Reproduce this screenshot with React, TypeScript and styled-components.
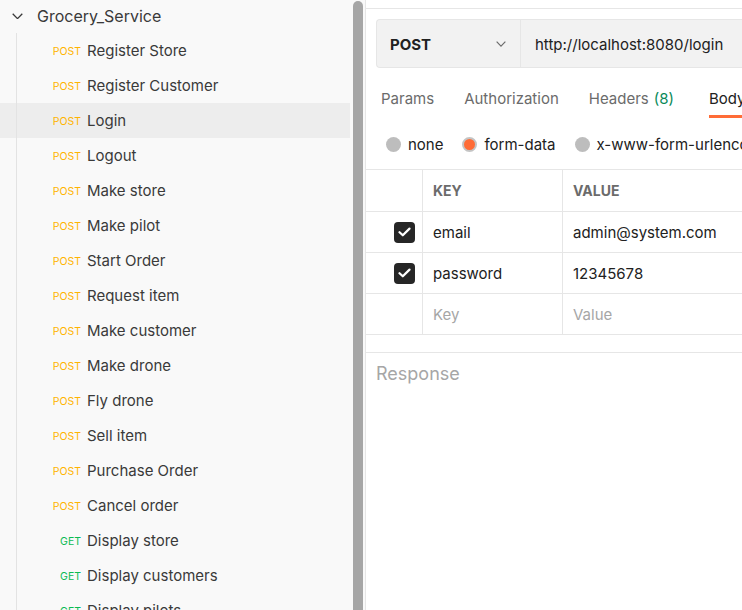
import React from "react";
import styled, { createGlobalStyle } from "styled-components";

const Global = createGlobalStyle`
  html, body { margin: 0; padding: 0; overflow: hidden; background: #fff; }
  body { font-family: Inter, "Noto Sans", sans-serif; }
  * { box-sizing: border-box; }
`;

const Shell = styled.div`
  display: flex;
  width: 742px;
  height: 610px;
  overflow: hidden;
`;

const Sidebar = styled.aside`
  flex: 0 0 365px;
  display: flex;
  background: #f9f9f9;
  border-right: 1px solid #e6e6e6;
`;

const Tree = styled.div`
  width: 350px;
  margin-top: -1px;
`;

const Track = styled.div`
  width: 15px;
  padding: 1px 0 0 3px;
`;

const Thumb = styled.div`
  width: 10px;
  height: 100%;
  background: #a6a6a6;
  border-radius: 5px 5px 0 0;
`;

const Folder = styled.div`
  display: flex;
  align-items: center;
  height: 34px;
  padding-left: 12px;
  gap: 14px;
  color: #3a3a3a;
  font-size: 16px;
`;

const Items = styled.div`
  position: relative;
  &::before {
    content: "";
    position: absolute;
    left: 16px;
    top: 0;
    bottom: 0;
    width: 1px;
    background: #e3e3e3;
  }
`;

const Row = styled.div<{ $active?: boolean }>`
  display: flex;
  align-items: center;
  height: 35px;
  padding-left: 44px;
  background: ${(p) => (p.$active ? "#ededed" : "transparent")};
`;

const Method = styled.span<{ $get?: boolean }>`
  width: 37px;
  padding-top: 2px;
  text-align: right;
  font-size: 10.5px;
  font-weight: 400;
  color: ${(p) => (p.$get ? "#0cbb52" : "#ffb400")};
`;

const Name = styled.span`
  margin-left: 6px;
  font-size: 15px;
  color: #3a3a3a;
`;

const Pane = styled.main`
  flex: 1 0 auto;
  width: 420px;
  background: #fff;
`;

const TopStrip = styled.div`
  height: 9px;
  border-bottom: 1px solid #e6e6e6;
`;

const RequestBar = styled.div`
  display: flex;
  margin: 10px 0 0 10px;
  width: 420px;
  height: 49px;
  background: #f2f2f2;
  border: 1px solid #e6e6e6;
  border-right: none;
  border-radius: 4px 0 0 4px;
`;

const MethodSelect = styled.div`
  display: flex;
  align-items: center;
  justify-content: space-between;
  width: 144px;
  padding: 1px 14px 0 13px;
  border-right: 1px solid #e6e6e6;
  font-size: 15px;
  font-weight: 700;
  color: #212121;
`;

const Url = styled.div`
  display: flex;
  align-items: center;
  padding: 1px 0 0 14px;
  font-size: 15px;
  color: #212121;
  white-space: nowrap;
`;

const Tabs = styled.div`
  display: flex;
  height: 50px;
  padding-left: 15px;
  gap: 30px;
  white-space: nowrap;
`;

const Tab = styled.div<{ $active?: boolean }>`
  display: flex;
  align-items: center;
  font-size: 15px;
  color: ${(p) => (p.$active ? "#212121" : "#6b6b6b")};
  border-bottom: 3px solid ${(p) => (p.$active ? "#ff6c37" : "transparent")};
  padding-top: 13px;
  margin-left: ${(p) => (p.$active ? "5px" : "0")};
`;

const Count = styled.span`
  color: #0a8a5a;
  margin-left: 5px;
`;

const Radios = styled.div`
  display: flex;
  align-items: center;
  height: 52px;
  padding: 2px 0 0 20px;
  gap: 19px;
  white-space: nowrap;
  border-bottom: 1px solid #e6e6e6;
`;

const RadioOpt = styled.label`
  display: flex;
  align-items: center;
  gap: 7px;
  font-size: 15px;
  color: #212121;
`;

const Dot = styled.span<{ $on?: boolean }>`
  width: 15px;
  height: 15px;
  border-radius: 50%;
  background: ${(p) => (p.$on ? "#ff6c37" : "#bdbdbd")};
  border: ${(p) => (p.$on ? "2px solid #c4c4c4" : "none")};
`;

const Table = styled.div`
  display: grid;
  grid-template-columns: 56px 140px 1fr;
  grid-template-rows: 42px 41px 41px 40px;
  width: 420px;
  border-bottom: 1px solid #e6e6e6;
`;

const Cell = styled.div<{ $head?: boolean; $muted?: boolean; $first?: boolean; $last?: boolean }>`
  display: flex;
  align-items: center;
  padding-left: 10px;
  font-size: ${(p) => (p.$head ? "14px" : "15px")};
  font-weight: ${(p) => (p.$head ? 700 : 400)};
  color: ${(p) => (p.$head ? "#6b6b6b" : p.$muted ? "#a6a6a6" : "#212121")};
  border-bottom: ${(p) => (p.$last ? "none" : "1px solid #e6e6e6")};
  border-left: ${(p) => (p.$first ? "none" : "1px solid #e6e6e6")};
  white-space: nowrap;
`;

const CheckCell = styled(Cell)`
  justify-content: flex-end;
  padding: 0 7px 0 0;
`;

const Check = styled.span`
  width: 21px;
  height: 21px;
  border-radius: 4px;
  background: #262626;
  display: flex;
  align-items: center;
  justify-content: center;
`;

const Divider = styled.div`
  height: 18px;
  border-bottom: 1px solid #e6e6e6;
`;

const Response = styled.div`
  padding: 10px 0 0 10px;
  font-size: 18px;
  color: #a6a6a6;
`;

const Chevron = ({ size = 11, color = "#3a3a3a" }: { size?: number; color?: string }) => (
  <svg width={size} height={size * 0.6} viewBox="0 0 11 6.6" fill="none">
    <path d="M0.7 0.7 L5.5 5.6 L10.3 0.7" stroke={color} strokeWidth="1.3" />
  </svg>
);

const Tick = () => (
  <svg width="13" height="10" viewBox="0 0 13 10" fill="none">
    <path d="M1.5 5.2 L4.8 8.3 L11.5 1.6" stroke="#fff" strokeWidth="2.2" strokeLinecap="round" strokeLinejoin="round" />
  </svg>
);

const requests: { m: "POST" | "GET"; n: string; active?: boolean }[] = [
  { m: "POST", n: "Register Store" },
  { m: "POST", n: "Register Customer" },
  { m: "POST", n: "Login", active: true },
  { m: "POST", n: "Logout" },
  { m: "POST", n: "Make store" },
  { m: "POST", n: "Make pilot" },
  { m: "POST", n: "Start Order" },
  { m: "POST", n: "Request item" },
  { m: "POST", n: "Make customer" },
  { m: "POST", n: "Make drone" },
  { m: "POST", n: "Fly drone" },
  { m: "POST", n: "Sell item" },
  { m: "POST", n: "Purchase Order" },
  { m: "POST", n: "Cancel order" },
  { m: "GET", n: "Display store" },
  { m: "GET", n: "Display customers" },
  { m: "GET", n: "Display pilots" },
];

export default function App() {
  return (
    <>
      <Global />
      <Shell>
        <Sidebar>
          <Tree>
            <Folder>
              <Chevron />
              <span>Grocery_Service</span>
            </Folder>
            <Items>
              {requests.map((r) => (
                <Row key={r.n} $active={r.active}>
                  <Method $get={r.m === "GET"}>{r.m}</Method>
                  <Name>{r.n}</Name>
                </Row>
              ))}
            </Items>
          </Tree>
          <Track>
            <Thumb />
          </Track>
        </Sidebar>
        <Pane>
          <TopStrip />
          <RequestBar>
            <MethodSelect>
              <span>POST</span>
              <Chevron size={10} color="#6b6b6b" />
            </MethodSelect>
            <Url>http://localhost:8080/login</Url>
          </RequestBar>
          <Tabs>
            <Tab>Params</Tab>
            <Tab>Authorization</Tab>
            <Tab>
              Headers<Count>(8)</Count>
            </Tab>
            <Tab $active>Body</Tab>
          </Tabs>
          <Radios>
            <RadioOpt>
              <Dot />
              none
            </RadioOpt>
            <RadioOpt>
              <Dot $on />
              form-data
            </RadioOpt>
            <RadioOpt>
              <Dot />
              x-www-form-urlencoded
            </RadioOpt>
          </Radios>
          <Table>
            <Cell $head $first />
            <Cell $head>KEY</Cell>
            <Cell $head>VALUE</Cell>
            <CheckCell $first>
              <Check>
                <Tick />
              </Check>
            </CheckCell>
            <Cell>email</Cell>
            <Cell>admin@system.com</Cell>
            <CheckCell $first>
              <Check>
                <Tick />
              </Check>
            </CheckCell>
            <Cell>password</Cell>
            <Cell>12345678</Cell>
            <Cell $first $last />
            <Cell $muted $last>Key</Cell>
            <Cell $muted $last>Value</Cell>
          </Table>
          <Divider />
          <Response>Response</Response>
        </Pane>
      </Shell>
    </>
  );
}
